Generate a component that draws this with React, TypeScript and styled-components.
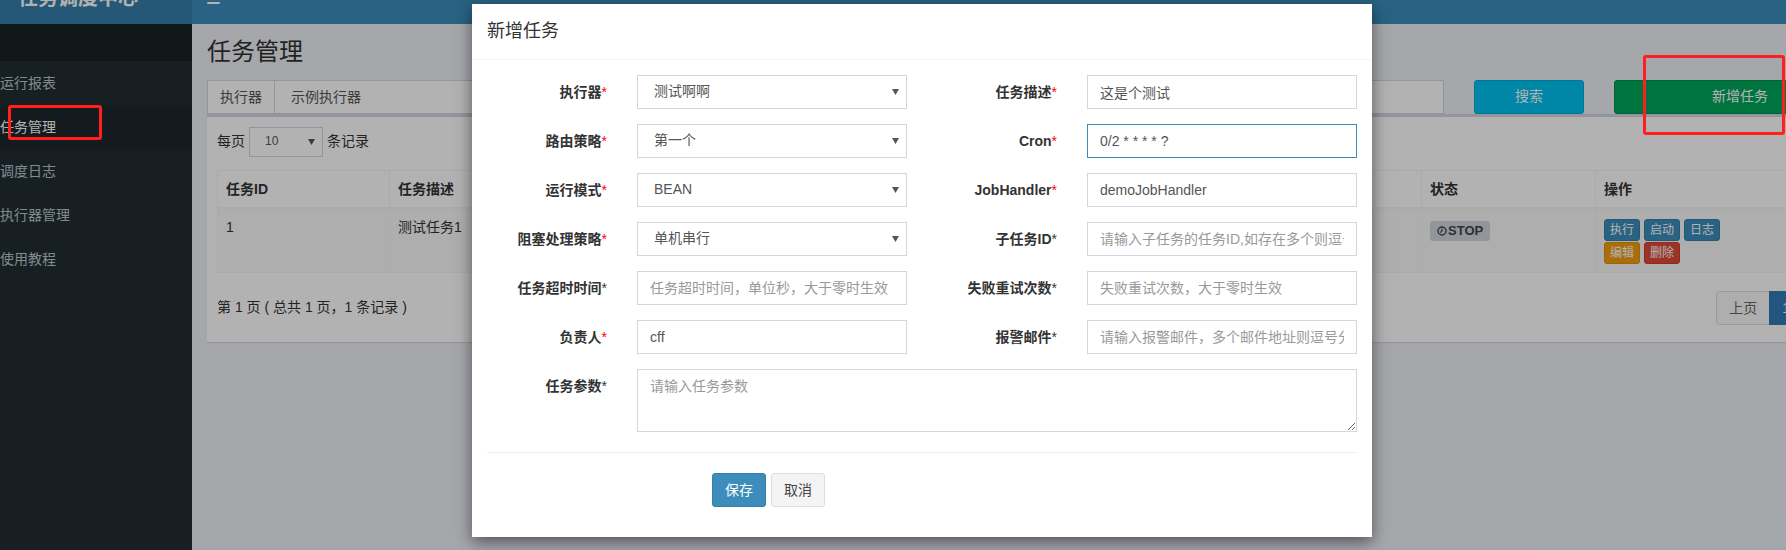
import React from 'react'
import styled, { createGlobalStyle } from 'styled-components'

const GlobalStyle = createGlobalStyle`
  html, body {
    margin: 0;
    padding: 0;
    overflow: hidden;
  }
  body {
    font-family: "Liberation Sans", "Noto Sans CJK SC", sans-serif;
    font-size: 14px;
    line-height: 1.42857;
    color: #333;
    background: #ecf0f5;
  }
  * {
    box-sizing: border-box;
  }
`

const MENU = ['运行报表', '任务管理', '调度日志', '执行器管理', '使用教程']

// last column takes what is left
const COLUMNS: { title: string; width?: number }[] = [
  { title: '任务ID', width: 172 },
  { title: '任务描述', width: 258 },
  { title: '运行模式', width: 258 },
  { title: 'Cron', width: 258 },
  { title: '负责人', width: 258 },
  { title: '状态', width: 174 },
  { title: '操作' },
]

type Tone = 'primary' | 'warning' | 'danger'

const ACTIONS: { text: string; tone: Tone }[] = [
  { text: '执行', tone: 'primary' },
  { text: '启动', tone: 'primary' },
  { text: '日志', tone: 'primary' },
  { text: '编辑', tone: 'warning' },
  { text: '删除', tone: 'danger' },
]

const TONES: Record<Tone, { bg: string; border: string }> = {
  primary: { bg: '#3c8dbc', border: '#367fa9' },
  warning: { bg: '#f39c12', border: '#e08e0b' },
  danger: { bg: '#dd4b39', border: '#d73925' },
}

interface IField {
  label: string
  required?: boolean
  kind: 'select' | 'input'
  value?: string
  placeholder?: string
  focus?: boolean
}

// left / right column pairs, row by row
const FORM_ROWS: [IField, IField][] = [
  [
    { label: '执行器', required: true, kind: 'select', value: '测试啊啊' },
    { label: '任务描述', required: true, kind: 'input', value: '这是个测试' },
  ],
  [
    { label: '路由策略', required: true, kind: 'select', value: '第一个' },
    { label: 'Cron', required: true, kind: 'input', value: '0/2 * * * * ?', focus: true },
  ],
  [
    { label: '运行模式', required: true, kind: 'select', value: 'BEAN' },
    { label: 'JobHandler', required: true, kind: 'input', value: 'demoJobHandler' },
  ],
  [
    { label: '阻塞处理策略', required: true, kind: 'select', value: '单机串行' },
    { label: '子任务ID', kind: 'input', placeholder: '请输入子任务的任务ID,如存在多个则逗号分隔' },
  ],
  [
    { label: '任务超时时间', kind: 'input', placeholder: '任务超时时间，单位秒，大于零时生效' },
    { label: '失败重试次数', kind: 'input', placeholder: '失败重试次数，大于零时生效' },
  ],
  [
    { label: '负责人', required: true, kind: 'input', value: 'cff' },
    { label: '报警邮件', kind: 'input', placeholder: '请输入报警邮件，多个邮件地址则逗号分隔' },
  ],
]

const Arrow = () => (
  <svg width="7" height="6" viewBox="0 0 7 6">
    <path d="M0 0h7L3.5 6z" fill="#555" />
  </svg>
)

const ClockIcon = () => (
  <svg width="10" height="10" viewBox="0 0 10 10">
    <circle cx="5" cy="5" r="4" fill="none" stroke="#444" strokeWidth="1.4" />
    <path d="M5 2.5V5L3.2 6.6" fill="none" stroke="#444" strokeWidth="1.2" />
  </svg>
)

const App = () => {
  return (
    <Page>
      <GlobalStyle />
      <Header>
        <Logo>
          <span>任务调度中心</span>
        </Logo>
        <Navbar>
          <ToggleBar />
        </Navbar>
      </Header>

      <Body>
        <Sidebar>
          <SidebarHeader />
          {MENU.map((item) => (
            <MenuItem key={item} $active={item === '任务管理'}>
              {item}
            </MenuItem>
          ))}
        </Sidebar>

        <Content>
          <PageTitle>任务管理</PageTitle>
          <FilterRow>
            <InputGroup>
              <Addon>执行器</Addon>
              <GroupSelect>示例执行器</GroupSelect>
            </InputGroup>
            <ToolButton $bg="#00c0ef" $border="#00acd6">搜索</ToolButton>
            <ToolButton $bg="#00a65a" $border="#008d4c">新增任务</ToolButton>
          </FilterRow>

          <Box>
            <LengthRow>
              每页
              <SmallSelect>
                <span>10</span>
                <Arrow />
              </SmallSelect>
              条记录
            </LengthRow>

            <Table>
              <colgroup>
                {COLUMNS.map((c) => (
                  <col key={c.title} width={c.width} />
                ))}
              </colgroup>
              <thead>
                <tr>
                  {COLUMNS.map((c) => (
                    <Th key={c.title}>{c.title}</Th>
                  ))}
                </tr>
              </thead>
              <tbody>
                <StripedRow>
                  <Td>1</Td>
                  <Td>测试任务1</Td>
                  <Td>BEAN：demoJobHandler</Td>
                  <Td>0/2 * * * * ?</Td>
                  <Td>cff</Td>
                  <Td>
                    <StatusLabel>
                      <ClockIcon />
                      STOP
                    </StatusLabel>
                  </Td>
                  <Td>
                    <ActionGrid>
                      {ACTIONS.map((a) => (
                        <ActBtn key={a.text} $tone={a.tone}>
                          {a.text}
                        </ActBtn>
                      ))}
                    </ActionGrid>
                  </Td>
                </StripedRow>
              </tbody>
            </Table>

            <TableFooter>
              <span>第 1 页 ( 总共 1 页，1 条记录 )</span>
              <Pagination>
                <PageBtn>上页</PageBtn>
                <PageBtn $active>1</PageBtn>
                <PageBtn>下页</PageBtn>
              </Pagination>
            </TableFooter>
          </Box>
        </Content>
      </Body>

      <Backdrop />

      <Modal>
        <ModalHeader>
          <ModalTitle>新增任务</ModalTitle>
        </ModalHeader>
        <ModalBody>
          <FormGrid>
            {FORM_ROWS.flat().map((f) => (
              <React.Fragment key={f.label}>
                <FieldLabel>
                  {f.label}
                  <Star $red={!!f.required}>*</Star>
                </FieldLabel>
                <FieldCell>
                  {f.kind === 'select' ? (
                    <FakeSelect>
                      <span>{f.value}</span>
                      <Arrow />
                    </FakeSelect>
                  ) : (
                    <TextInput
                      $focus={!!f.focus}
                      value={f.value ?? ''}
                      placeholder={f.placeholder}
                      readOnly
                    />
                  )}
                </FieldCell>
              </React.Fragment>
            ))}
            <FieldLabel>
              任务参数
              <Star>*</Star>
            </FieldLabel>
            <FieldCell $wide>
              <TextArea placeholder="请输入任务参数" readOnly />
            </FieldCell>
          </FormGrid>
          <Divider />
          <ButtonRow>
            <FormButton $primary>保存</FormButton>
            <FormButton>取消</FormButton>
          </ButtonRow>
        </ModalBody>
      </Modal>

      <Annotation $left={8} $top={105} $w={94} $h={35} />
      <Annotation $left={1643} $top={55} $w={142} $h={80} />
    </Page>
  )
}

const Page = styled.div`
  position: relative;
  width: 1872px;
  height: 550px;
  display: flex;
  flex-direction: column;
  overflow: hidden;
`

const Header = styled.header`
  display: flex;
  height: 24px;
  flex-shrink: 0;
`

const Logo = styled.div`
  width: 192px;
  background: #367fa9;
  overflow: hidden;
  padding-left: 18px;
  color: #fff;
  font-size: 20px;
  font-weight: 700;
  line-height: 20px;

  > span {
    display: block;
    margin-top: -12px;
  }
`

const Navbar = styled.div`
  flex: 1;
  background: #3c8dbc;
  padding-left: 15px;
`

const ToggleBar = styled.div`
  width: 13px;
  height: 2px;
  margin-top: 2px;
  background: #fff;
  border-radius: 1px;
`

const Body = styled.div`
  flex: 1;
  display: flex;
  min-height: 0;
`

const Sidebar = styled.aside`
  width: 192px;
  flex-shrink: 0;
  background: #222d32;
`

const SidebarHeader = styled.div`
  height: 37px;
  background: #1a2226;
`

const MenuItem = styled.div<{ $active?: boolean }>`
  padding: 12px 0;
  line-height: 20px;
  font-size: 14px;
  color: ${(p) => (p.$active ? '#fff' : '#b8c7ce')};
  background: ${(p) => (p.$active ? '#1e282c' : 'transparent')};
`

const Content = styled.main`
  flex: 1;
  padding: 15px 15px 0;
  background: #ecf0f5;
`

const PageTitle = styled.h1`
  margin: 0 0 15px;
  font-size: 24px;
  font-weight: 400;
  line-height: 26px;
  color: #333;
`

const FilterRow = styled.div`
  display: grid;
  grid-template-columns: 1237px 110px 252px;
  column-gap: 30px;
`

const InputGroup = styled.div`
  display: flex;
  height: 34px;
`

const Addon = styled.div`
  padding: 6px 12px;
  line-height: 20px;
  background: #fff;
  border: 1px solid #d2d6de;
  color: #555;
`

const GroupSelect = styled.div`
  flex: 1;
  padding: 6px 16px;
  line-height: 20px;
  background: #fff;
  border: 1px solid #d2d6de;
  border-left: 0;
  color: #555;
`

const ToolButton = styled.div<{ $bg: string; $border: string }>`
  height: 34px;
  display: flex;
  align-items: center;
  justify-content: center;
  background: ${(p) => p.$bg};
  border: 1px solid ${(p) => p.$border};
  border-radius: 3px;
  color: #fff;
`

const Box = styled.section`
  background: #fff;
  border-top: 3px solid #d2d6de;
  box-shadow: 0 1px 1px rgba(0, 0, 0, 0.1);
  padding: 10px;
`

const LengthRow = styled.div`
  display: flex;
  align-items: center;
  gap: 4px;
  height: 30px;
`

const SmallSelect = styled.div`
  width: 74px;
  height: 30px;
  display: flex;
  align-items: center;
  justify-content: space-between;
  padding: 0 7px 0 15px;
  border: 1px solid #d2d6de;
  font-size: 12px;
  color: #555;
`

const Table = styled.table`
  width: 100%;
  margin-top: 13px;
  border-collapse: collapse;
  table-layout: fixed;
  border: 1px solid #f4f4f4;
`

const Th = styled.th`
  padding: 8px;
  text-align: left;
  font-weight: 700;
  line-height: 20px;
  border: 1px solid #f4f4f4;
  border-bottom-width: 2px;
  white-space: nowrap;
  overflow: hidden;
`

const StripedRow = styled.tr`
  background: #f9f9f9;
`

const Td = styled.td`
  height: 64px;
  padding: 8px;
  vertical-align: top;
  line-height: 20px;
  border: 1px solid #f4f4f4;
  white-space: nowrap;
  overflow: hidden;
`

const StatusLabel = styled.span`
  display: inline-flex;
  align-items: center;
  gap: 1px;
  height: 20px;
  margin-top: 4px;
  padding: 0 7px;
  border-radius: 3px;
  background: #d2d6de;
  color: #444;
  font-size: 13px;
  font-weight: 700;
`

const ActionGrid = styled.div`
  display: grid;
  grid-template-columns: repeat(3, max-content);
  column-gap: 4px;
  row-gap: 1px;
  margin-top: 2px;
`

const ActBtn = styled.span<{ $tone: Tone }>`
  display: inline-block;
  padding: 1px 5px;
  font-size: 12px;
  line-height: 18px;
  border-radius: 3px;
  color: #fff;
  background: ${(p) => TONES[p.$tone].bg};
  border: 1px solid ${(p) => TONES[p.$tone].border};
`

const TableFooter = styled.div`
  display: flex;
  align-items: center;
  justify-content: space-between;
  height: 34px;
  margin: 18px 0 7px;
`

const Pagination = styled.div`
  display: flex;
`

const PageBtn = styled.span<{ $active?: boolean }>`
  padding: 6px 12px;
  line-height: 20px;
  border: 1px solid ${(p) => (p.$active ? '#367fa9' : '#ddd')};
  margin-left: -1px;
  background: ${(p) => (p.$active ? '#337ab7' : '#fafafa')};
  color: ${(p) => (p.$active ? '#fff' : '#666')};

  &:first-child {
    border-radius: 4px 0 0 4px;
  }
  &:last-child {
    border-radius: 0 4px 4px 0;
  }
`

const Backdrop = styled.div`
  position: absolute;
  inset: 0;
  background: rgba(0, 0, 0, 0.3);
`

const Modal = styled.div`
  position: absolute;
  left: 472px;
  top: 4px;
  width: 900px;
  background: #fff;
  box-shadow: 0 5px 15px rgba(0, 0, 0, 0.5);
`

const ModalHeader = styled.div`
  padding: 15px;
  border-bottom: 1px solid #f4f4f4;
`

const ModalTitle = styled.h4`
  margin: 0;
  font-size: 18px;
  font-weight: 400;
  line-height: 25px;
  color: #333;
`

const ModalBody = styled.div`
  padding: 15px 0;
`

const FormGrid = styled.div`
  display: grid;
  grid-template-columns: 150px 300px 150px 300px;
  row-gap: 15px;
`

const FieldLabel = styled.label`
  padding: 7px 15px 0;
  text-align: right;
  font-weight: 700;
  line-height: 20px;
  color: #333;
  white-space: nowrap;
`

const Star = styled.span<{ $red?: boolean }>`
  color: ${(p) => (p.$red ? '#f00' : '#333')};
  font-weight: 400;
`

const FieldCell = styled.div<{ $wide?: boolean }>`
  padding: 0 15px;
  grid-column: ${(p) => (p.$wide ? 'span 3' : 'auto')};
`

const FakeSelect = styled.div`
  height: 34px;
  display: flex;
  align-items: center;
  justify-content: space-between;
  padding: 0 7px 0 16px;
  border: 1px solid #d2d6de;
  color: #555;
`

const TextInput = styled.input<{ $focus?: boolean }>`
  display: block;
  width: 100%;
  height: 34px;
  padding: 6px 12px;
  border: 1px solid ${(p) => (p.$focus ? '#3c8dbc' : '#d2d6de')};
  border-radius: 0;
  outline: none;
  font-family: inherit;
  font-size: 14px;
  color: #555;

  &::placeholder {
    color: #999;
  }
`

const TextArea = styled.textarea`
  display: block;
  width: 100%;
  height: 63px;
  padding: 6px 12px;
  border: 1px solid #d2d6de;
  border-radius: 0;
  outline: none;
  font-family: inherit;
  font-size: 14px;
  line-height: 20px;
  color: #555;

  &::placeholder {
    color: #999;
  }
`

const Divider = styled.hr`
  margin: 20px 15px;
  border: 0;
  border-top: 1px solid #eee;
`

const ButtonRow = styled.div`
  display: flex;
  gap: 5px;
  padding-left: 240px;
  margin-bottom: 15px;
`

const FormButton = styled.span<{ $primary?: boolean }>`
  padding: 6px 12px;
  line-height: 20px;
  border-radius: 3px;
  background: ${(p) => (p.$primary ? '#3c8dbc' : '#f4f4f4')};
  border: 1px solid ${(p) => (p.$primary ? '#367fa9' : '#ddd')};
  color: ${(p) => (p.$primary ? '#fff' : '#444')};
`

const Annotation = styled.div<{ $left: number; $top: number; $w: number; $h: number }>`
  position: absolute;
  left: ${(p) => p.$left}px;
  top: ${(p) => p.$top}px;
  width: ${(p) => p.$w}px;
  height: ${(p) => p.$h}px;
  border: 3px solid #ff1f1f;
  border-radius: 3px;
`

export default App
